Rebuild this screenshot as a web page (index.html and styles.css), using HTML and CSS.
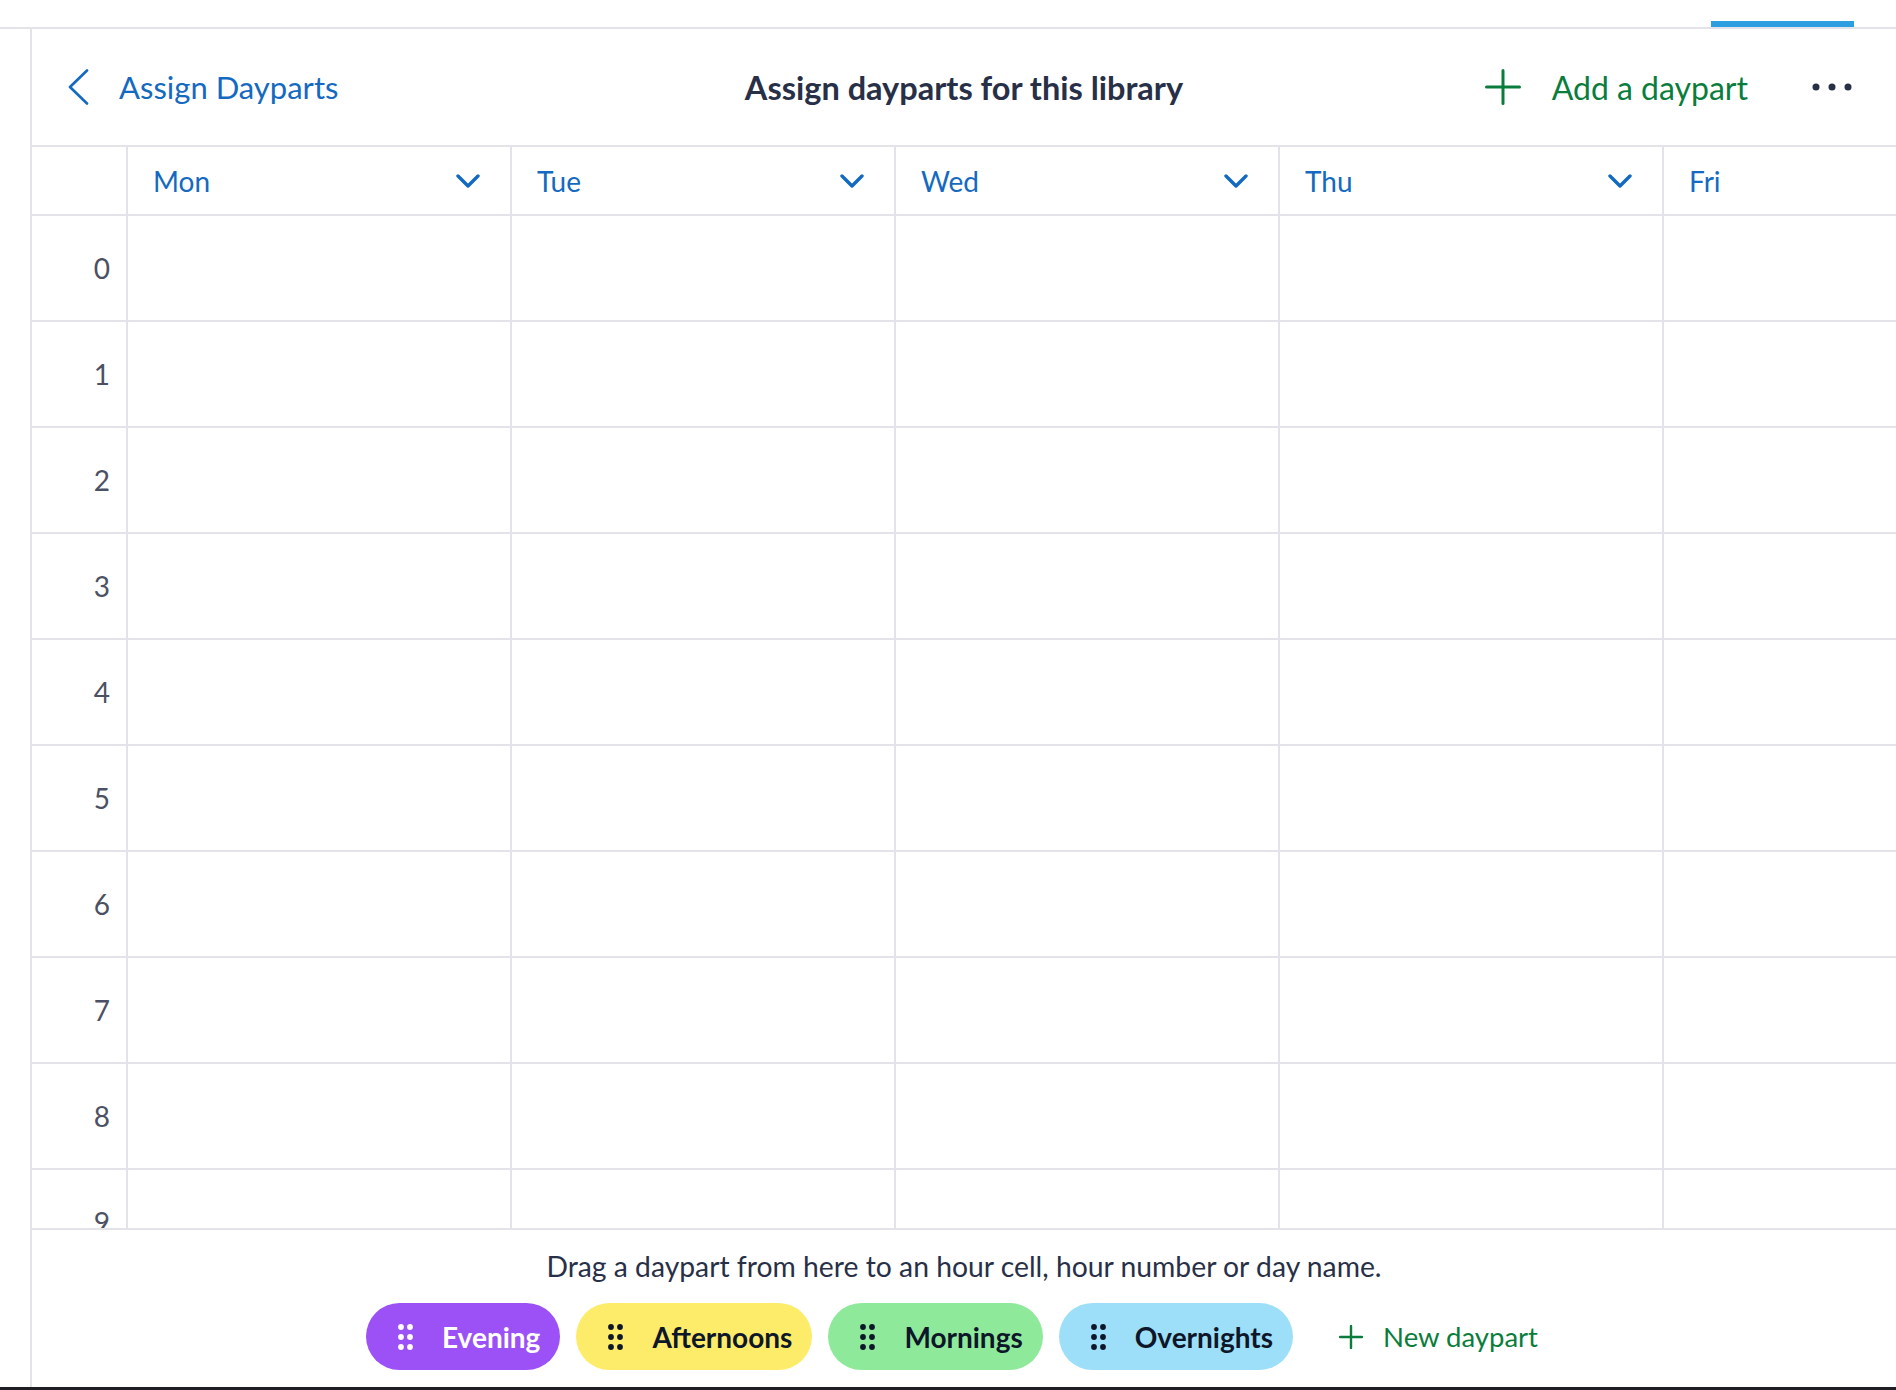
FILE: index.html
```html
<!DOCTYPE html>
<html lang="en">
<head>
<meta charset="utf-8">
<title>Assign Dayparts</title>
<link rel="stylesheet" href="styles.css">
</head>
<body>
<div class="app">
  <div class="topstrip"><div class="tab-indicator"></div></div>
  <div class="main">
    <div class="gutter"></div>
    <div class="panel">
      <header class="header">
        <a class="back" href="#">
          <svg class="back-icon" width="22" height="36" viewBox="0 0 22 36"><polyline points="20,1.5 3,18 20,34.5" fill="none" stroke="currentColor" stroke-width="2.6" stroke-linecap="round" stroke-linejoin="round"/></svg>
          <span>Assign Dayparts</span>
        </a>
        <h1 class="title">Assign dayparts for this library</h1>
        <div class="actions">
          <button class="add" type="button">
            <svg width="36" height="36" viewBox="0 0 36 36"><path d="M18 1.5V34.5M1.5 18H34.5" fill="none" stroke="currentColor" stroke-width="3" stroke-linecap="round"/></svg>
            <span>Add a daypart</span>
          </button>
          <button class="more" type="button" aria-label="More">
            <svg width="40" height="8" viewBox="0 0 40 8"><circle cx="4" cy="4" r="3.5" fill="currentColor"/><circle cx="20" cy="4" r="3.5" fill="currentColor"/><circle cx="36" cy="4" r="3.5" fill="currentColor"/></svg>
          </button>
        </div>
      </header>

      <div class="grid-wrap">
        <div class="grid">
          <div class="cell corner"></div>
          <div class="cell day"><span>Mon</span><svg class="chev" width="24" height="14" viewBox="0 0 24 14"><polyline points="2,2 12,12 22,2" fill="none" stroke="currentColor" stroke-width="3.4" stroke-linecap="round" stroke-linejoin="round"/></svg></div>
          <div class="cell day"><span>Tue</span><svg class="chev" width="24" height="14" viewBox="0 0 24 14"><polyline points="2,2 12,12 22,2" fill="none" stroke="currentColor" stroke-width="3.4" stroke-linecap="round" stroke-linejoin="round"/></svg></div>
          <div class="cell day"><span>Wed</span><svg class="chev" width="24" height="14" viewBox="0 0 24 14"><polyline points="2,2 12,12 22,2" fill="none" stroke="currentColor" stroke-width="3.4" stroke-linecap="round" stroke-linejoin="round"/></svg></div>
          <div class="cell day"><span>Thu</span><svg class="chev" width="24" height="14" viewBox="0 0 24 14"><polyline points="2,2 12,12 22,2" fill="none" stroke="currentColor" stroke-width="3.4" stroke-linecap="round" stroke-linejoin="round"/></svg></div>
          <div class="cell day"><span>Fri</span><svg class="chev" width="24" height="14" viewBox="0 0 24 14"><polyline points="2,2 12,12 22,2" fill="none" stroke="currentColor" stroke-width="3.4" stroke-linecap="round" stroke-linejoin="round"/></svg></div>
          <div class="cell day"><span>Sat</span><svg class="chev" width="24" height="14" viewBox="0 0 24 14"><polyline points="2,2 12,12 22,2" fill="none" stroke="currentColor" stroke-width="3.4" stroke-linecap="round" stroke-linejoin="round"/></svg></div>
          <div class="cell day"><span>Sun</span><svg class="chev" width="24" height="14" viewBox="0 0 24 14"><polyline points="2,2 12,12 22,2" fill="none" stroke="currentColor" stroke-width="3.4" stroke-linecap="round" stroke-linejoin="round"/></svg></div>

          <div class="cell hour">0</div><div class="cell"></div><div class="cell"></div><div class="cell"></div><div class="cell"></div><div class="cell"></div><div class="cell"></div><div class="cell"></div>
          <div class="cell hour">1</div><div class="cell"></div><div class="cell"></div><div class="cell"></div><div class="cell"></div><div class="cell"></div><div class="cell"></div><div class="cell"></div>
          <div class="cell hour">2</div><div class="cell"></div><div class="cell"></div><div class="cell"></div><div class="cell"></div><div class="cell"></div><div class="cell"></div><div class="cell"></div>
          <div class="cell hour">3</div><div class="cell"></div><div class="cell"></div><div class="cell"></div><div class="cell"></div><div class="cell"></div><div class="cell"></div><div class="cell"></div>
          <div class="cell hour">4</div><div class="cell"></div><div class="cell"></div><div class="cell"></div><div class="cell"></div><div class="cell"></div><div class="cell"></div><div class="cell"></div>
          <div class="cell hour">5</div><div class="cell"></div><div class="cell"></div><div class="cell"></div><div class="cell"></div><div class="cell"></div><div class="cell"></div><div class="cell"></div>
          <div class="cell hour">6</div><div class="cell"></div><div class="cell"></div><div class="cell"></div><div class="cell"></div><div class="cell"></div><div class="cell"></div><div class="cell"></div>
          <div class="cell hour">7</div><div class="cell"></div><div class="cell"></div><div class="cell"></div><div class="cell"></div><div class="cell"></div><div class="cell"></div><div class="cell"></div>
          <div class="cell hour">8</div><div class="cell"></div><div class="cell"></div><div class="cell"></div><div class="cell"></div><div class="cell"></div><div class="cell"></div><div class="cell"></div>
          <div class="cell hour">9</div><div class="cell"></div><div class="cell"></div><div class="cell"></div><div class="cell"></div><div class="cell"></div><div class="cell"></div><div class="cell"></div>
          <div class="cell hour">10</div><div class="cell"></div><div class="cell"></div><div class="cell"></div><div class="cell"></div><div class="cell"></div><div class="cell"></div><div class="cell"></div>
        </div>
      </div>

      <footer class="footer">
        <p class="hint">Drag a daypart from here to an hour cell, hour number or day name.</p>
        <div class="chips">
          <div class="chip chip-evening">
            <svg class="grip" width="15" height="26" viewBox="0 0 15 26"><circle cx="3" cy="3" r="2.9"/><circle cx="12" cy="3" r="2.9"/><circle cx="3" cy="13" r="2.9"/><circle cx="12" cy="13" r="2.9"/><circle cx="3" cy="23" r="2.9"/><circle cx="12" cy="23" r="2.9"/></svg>
            <span>Evening</span>
          </div>
          <div class="chip chip-afternoons">
            <svg class="grip" width="15" height="26" viewBox="0 0 15 26"><circle cx="3" cy="3" r="2.9"/><circle cx="12" cy="3" r="2.9"/><circle cx="3" cy="13" r="2.9"/><circle cx="12" cy="13" r="2.9"/><circle cx="3" cy="23" r="2.9"/><circle cx="12" cy="23" r="2.9"/></svg>
            <span>Afternoons</span>
          </div>
          <div class="chip chip-mornings">
            <svg class="grip" width="15" height="26" viewBox="0 0 15 26"><circle cx="3" cy="3" r="2.9"/><circle cx="12" cy="3" r="2.9"/><circle cx="3" cy="13" r="2.9"/><circle cx="12" cy="13" r="2.9"/><circle cx="3" cy="23" r="2.9"/><circle cx="12" cy="23" r="2.9"/></svg>
            <span>Mornings</span>
          </div>
          <div class="chip chip-overnights">
            <svg class="grip" width="15" height="26" viewBox="0 0 15 26"><circle cx="3" cy="3" r="2.9"/><circle cx="12" cy="3" r="2.9"/><circle cx="3" cy="13" r="2.9"/><circle cx="12" cy="13" r="2.9"/><circle cx="3" cy="23" r="2.9"/><circle cx="12" cy="23" r="2.9"/></svg>
            <span>Overnights</span>
          </div>
          <button class="new-daypart" type="button">
            <svg width="24" height="24" viewBox="0 0 24 24"><path d="M12 1V23M1 12H23" fill="none" stroke="currentColor" stroke-width="2.4" stroke-linecap="round"/></svg>
            <span>New daypart</span>
          </button>
        </div>
      </footer>
    </div>
  </div>
  <div class="bottom-strip"></div>
</div>
</body>
</html>
```

FILE: styles.css
```css
* { box-sizing: border-box; }

html, body {
  margin: 0;
  padding: 0;
  background: #ffffff;
}

body {
  font-family: Lato, "Open Sans", "Liberation Sans", sans-serif;
  color: #283047;
  width: 1896px;
  height: 1390px;
  overflow: hidden;
}

.app {
  width: 1896px;
  height: 1390px;
  display: flex;
  flex-direction: column;
}

.topstrip {
  height: 29px;
  flex: 0 0 29px;
  border-bottom: 2px solid #e3e3e9;
  display: flex;
  justify-content: flex-end;
  align-items: flex-end;
  padding-right: 42px;
}

.tab-indicator {
  width: 143px;
  height: 6px;
  background: #2d9fe0;
}

.main {
  flex: 1 1 auto;
  display: flex;
  min-height: 0;
}

.gutter {
  width: 32px;
  flex: 0 0 32px;
  border-right: 2px solid #e3e3e9;
}

.panel {
  flex: 1 1 auto;
  min-width: 0;
  display: flex;
  flex-direction: column;
  overflow: hidden;
}

/* Header */
.header {
  height: 118px;
  flex: 0 0 118px;
  border-bottom: 2px solid #e3e3e9;
  display: grid;
  grid-template-columns: 1fr auto 1fr;
  align-items: center;
}

.back {
  display: flex;
  align-items: center;
  gap: 30px;
  padding-left: 35px;
  color: #1469c0;
  text-decoration: none;
  font-size: 31px;
  justify-self: start;
}

.back-icon { display: block; }

.title {
  margin: 0;
  font-size: 32.5px;
  font-weight: 700;
  color: #283047;
  white-space: nowrap;
}

.actions {
  justify-self: end;
  display: flex;
  align-items: center;
  gap: 64px;
  padding-right: 44px;
}

.add, .more, .new-daypart {
  border: 0;
  background: none;
  padding: 0;
  font-family: inherit;
  cursor: pointer;
  display: flex;
  align-items: center;
}

.add {
  gap: 31px;
  color: #0a7d3c;
  font-size: 32px;
}

.add svg { display: block; }

.more {
  color: #283047;
}

.more svg { display: block; }

/* Grid */
.grid-wrap {
  height: 1083px;
  flex: 0 0 1083px;
  border-bottom: 2px solid #e3e3e9;
  overflow: hidden;
}

.grid {
  display: grid;
  grid-template-columns: 96px repeat(7, 384px);
  grid-template-rows: 69px;
  grid-auto-rows: 106px;
  width: max-content;
}

.cell {
  border-right: 2px solid #e3e3e9;
  border-bottom: 2px solid #e3e3e9;
}

.day {
  display: flex;
  align-items: center;
  justify-content: space-between;
  padding: 0 30px 0 25px;
  color: #1469c0;
  font-size: 28px;
}

.chev { display: block; }

.hour {
  display: flex;
  align-items: center;
  justify-content: flex-end;
  padding-right: 16px;
  font-size: 28px;
  color: #4b5163;
}

/* Footer */
.footer {
  flex: 1 1 auto;
  display: flex;
  flex-direction: column;
  align-items: center;
  padding-top: 19px;
}

.hint {
  margin: 0;
  font-size: 28.3px;
  line-height: 34px;
  color: #283047;
}

.chips {
  margin-top: 20px;
  display: flex;
  align-items: center;
  gap: 16px;
}

.chip {
  height: 67px;
  border-radius: 34px;
  display: flex;
  align-items: center;
  gap: 29px;
  padding: 0 20px 0 32px;
  font-size: 28px;
  font-weight: 700;
  color: #0e1629;
}

.grip { display: block; fill: currentColor; }

.chip-evening { background: #9b51f5; color: #ffffff; }
.chip-afternoons { background: #fdec6a; }
.chip-mornings { background: #8fe99b; }
.chip-overnights { background: #9ddff8; }

.new-daypart {
  height: 67px;
  gap: 20px;
  padding: 0 24px 0 30px;
  color: #0a7d3c;
  font-size: 27.5px;
}

.new-daypart svg { display: block; }

.bottom-strip {
  height: 3px;
  flex: 0 0 3px;
  background: #1e1f22;
}
```
